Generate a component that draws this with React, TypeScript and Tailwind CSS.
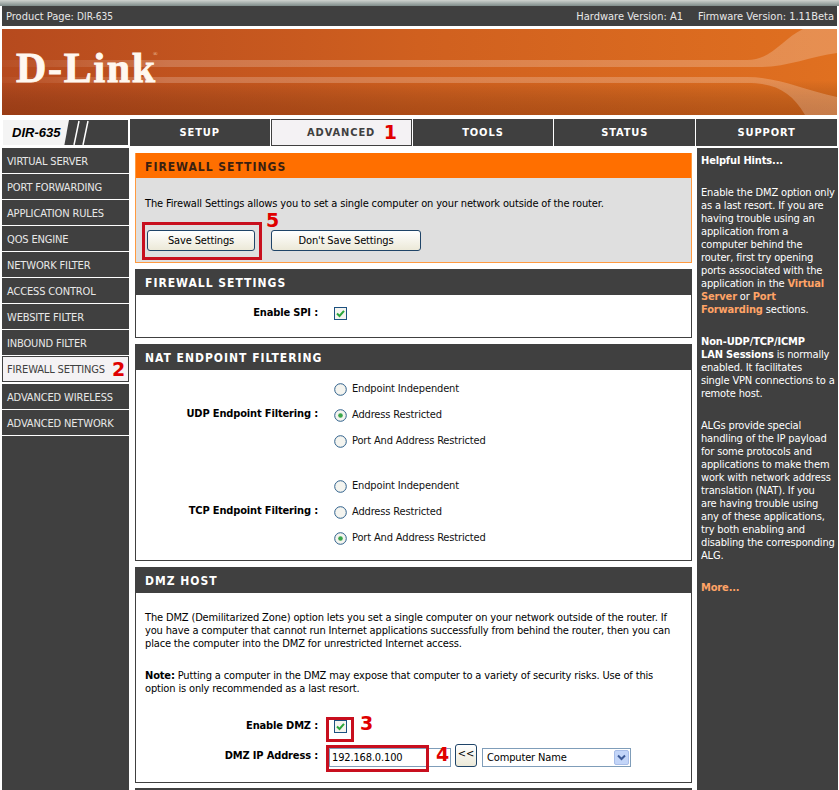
import React from "react";

const font = "font-['DejaVu_Sans_Condensed','DejaVu_Sans',sans-serif]";
const head = "font-['DejaVu_Sans_Condensed','DejaVu_Sans',sans-serif] font-bold";
const label = "w-[182px] text-right font-bold text-[11px] leading-[14px] text-black";

function Num({ n, className }: { n: string; className: string }) {
  return <span className={`absolute font-['DejaVu_Sans',sans-serif] font-bold text-[19px] leading-none tracking-normal text-[#e00000] ${className}`}>{n}</span>;
}

function PanelHead({ title, orange }: { title: string; orange?: boolean }) {
  return (
    <div className={`h-[25px] pl-[9px] flex items-center ${head} text-[12px] tracking-[1px] ${orange ? "bg-[#ff6f00] text-[#3a2010] pt-[2px]" : "bg-[#404040] text-white"}`}>
      {title}
    </div>
  );
}

function Radio({ on }: { on?: boolean }) {
  return (
    <svg width="13" height="13" viewBox="0 0 13 13" className="shrink-0">
      <circle cx="6.5" cy="6.5" r="5.8" fill="#f4f4ef" stroke="#2d5f8a" strokeWidth="1" />
      {on && <circle cx="6.5" cy="6.5" r="2.3" fill="#3aa64a" />}
    </svg>
  );
}

function Check() {
  return (
    <svg width="13" height="13" viewBox="0 0 13 13" className="shrink-0">
      <rect x="0.5" y="0.5" width="12" height="12" fill="#f4f4ef" stroke="#1c5180" />
      <path d="M3 6.5 L5.5 9 L10 3.8" fill="none" stroke="#2aa63a" strokeWidth="2" />
    </svg>
  );
}

function RadioGroup({ lab, sel }: { lab: string; sel: number }) {
  const opts = ["Endpoint Independent", "Address Restricted", "Port And Address Restricted"];
  return (
    <div className="flex items-center">
      <div className={`${label} pb-[3px]`}>{lab}&nbsp;:</div>
      <div className="ml-[16px] flex flex-col">
        {opts.map((o, i) => (
          <div key={o} className="h-[26px] flex items-center gap-[5px]">
            <Radio on={i === sel} />
            <span className="text-[11px] text-[#111] pt-[1px]">{o}</span>
          </div>
        ))}
      </div>
    </div>
  );
}

const side = ["VIRTUAL SERVER", "PORT FORWARDING", "APPLICATION RULES", "QOS ENGINE", "NETWORK FILTER", "ACCESS CONTROL", "WEBSITE FILTER", "INBOUND FILTER"];
const side2 = ["ADVANCED WIRELESS", "ADVANCED NETWORK"];

function SideItem({ t }: { t: string }) {
  return (
    <div className="h-[26px] pl-[5px] pt-[3px] flex items-center border-b border-[#ffffff] bg-[#404040] text-[#e8e8e8] text-[11px]">{t}</div>
  );
}

function NavCell({ t, active, w }: { t: string; active?: boolean; w: string }) {
  return (
    <div className={`${w} h-[27px] pt-[1px] flex items-center justify-center ${head} text-[11px] tracking-[0.9px] ${active ? "bg-[#f4f2f4] text-[#404040] border-[1px] border-[#404040] relative" : "bg-[#404040] text-white"}`}>
      {t}
      {active && <Num n="1" className="left-[112px] top-[3px]" />}
    </div>
  );
}

export default function App() {
  return (
    <div className={`relative w-[839px] h-[790px] overflow-hidden bg-white tracking-[-0.15px] ${font}`}>
      <div className="h-[6px] bg-gradient-to-b from-[#d0d4d0] to-[#7f8c8a]" />
      <div className="mx-[2px] w-[835px]">
        <div className="h-[20px] pt-[2px] bg-[#404040] text-[#e8e8e8] text-[11px] tracking-normal flex items-center justify-between pl-[4px] pr-[3px]">
          <span>Product Page: <span className="text-[10px]">DIR-635</span></span>
          <span className="flex gap-[15px]">
            <span>Hardware Version: A1</span>
            <span>Firmware Version: 1.11Beta</span>
          </span>
        </div>
        <div className="mt-[3px] h-[86px] relative bg-gradient-to-r from-[#b64a1e] via-[#d0601f] to-[#e07020] overflow-hidden">
          <svg width="835" height="86" viewBox="0 0 835 86" className="absolute inset-0">
            <defs>
              <linearGradient id="b" x1="0" x2="1">
                <stop offset="0" stopColor="#ffffff" stopOpacity="0.03" />
                <stop offset="0.2" stopColor="#ffffff" stopOpacity="0.2" />
                <stop offset="1" stopColor="#ffffff" stopOpacity="0.22" />
              </linearGradient>
              <linearGradient id="v" x1="0" x2="0" y1="0" y2="1">
                <stop offset="0" stopColor="#000" stopOpacity="0" />
                <stop offset="0.6" stopColor="#000" stopOpacity="0" />
                <stop offset="1" stopColor="#5a1c00" stopOpacity="0.3" />
              </linearGradient>
            </defs>
            <rect width="835" height="86" fill="url(#v)" />
            <path d="M0 31 H745 C770 31 780 10 801 0 H835 V24 C810 27 785 38 760 38 H0 Z" fill="url(#b)" />
            <path d="M0 48 H745 C775 48 800 60 835 68 V86 H803 C790 64 775 54 745 54 H0 Z" fill="url(#b)" />
          </svg>
          <span className="absolute left-[14px] top-[13px] font-['Liberation_Serif',serif] font-bold text-[42px] leading-[52px] tracking-[1.7px] text-[#fff8f0] [-webkit-text-stroke:0.8px_#fff8f0]">
            D-Link<span className="align-top text-[6px] leading-[24px] font-normal tracking-normal text-[#f6d0b0] ml-[-4px] [-webkit-text-stroke:0px]">®</span>
          </span>
        </div>
        <div className="mt-[4px] flex gap-[1px] border-b border-white">
          <div className="w-[127px] h-[27px] bg-[#404040] flex items-stretch border border-white">
            <div className="w-[66px] bg-[#f4f4f4] text-black italic font-bold text-[13px] tracking-normal flex items-center pl-[9px] [clip-path:polygon(0_0,100%_0,93%_100%,0_100%)] font-['Liberation_Sans',sans-serif]">DIR-635</div>
            <svg width="24" height="25" viewBox="0 0 24 25" className="ml-[2px]">
              <path d="M8 1 L3 25 M17 1 L12 25" stroke="#fff" strokeWidth="1.5" />
            </svg>
          </div>
          <NavCell t="SETUP" w="w-[140px]" />
          <NavCell t="ADVANCED" active w="w-[141px]" />
          <NavCell t="TOOLS" w="w-[141px]" />
          <NavCell t="STATUS" w="w-[141px]" />
          <NavCell t="SUPPORT" w="w-[141px]" />
        </div>
        <div className="mt-[1px] flex gap-[1px] h-[642px]">
          <div className="w-[127px] bg-[#404040] shrink-0">
            {side.map((t) => <SideItem key={t} t={t} />)}
            <div className="relative h-[26px] pt-[2px] bg-[#f4f2f4] border border-[#404040] pl-[4px] flex items-center text-[11px] text-[#404040] shadow-[0_0_0_1px_#fff]">
              FIREWALL SETTINGS
              <Num n="2" className="left-[109px] top-[3px]" />
            </div>
            <div className="h-[2px] bg-[#404040] border-b border-white" />
            {side2.map((t) => <SideItem key={t} t={t} />)}
          </div>

          <div className="w-[566px] shrink-0 bg-white pl-[5px] pr-[4px] pt-[5px] flex flex-col gap-[6px] text-black">
            <div className="shrink-0 border border-[#ff9a40] border-t-0 h-[110px]">
              <PanelHead title="FIREWALL SETTINGS" orange />
              <div className="h-[84px] bg-[#dfdfdf] pl-[9px] pt-[19px] text-[11px] leading-[13px] relative">
                The Firewall Settings allows you to set a single computer on your network outside of the router.
                <div className="mt-[20px] flex gap-[16px] ml-[2px]">
                  <button className="w-[108px] h-[21px] rounded-[3px] border border-[#1f4468] bg-gradient-to-b from-white to-[#ece9d8] text-[11px]">Save Settings</button>
                  <button className="w-[150px] h-[21px] rounded-[3px] border border-[#1f4468] bg-gradient-to-b from-white to-[#ece9d8] text-[11px]">Don't Save Settings</button>
                </div>
                <div className="absolute left-[6px] top-[44px] w-[120px] h-[38px] border-[3px] border-[#c80f1e]" />
                <Num n="5" className="left-[130px] top-[33px]" />
              </div>
            </div>

            <div className="shrink-0 border border-[#404040] h-[69px]">
              <PanelHead title="FIREWALL SETTINGS" />
              <div className="flex items-center pt-[11px]">
                <div className={label}>Enable SPI&nbsp;:</div>
                <div className="ml-[16px]"><Check /></div>
              </div>
            </div>

            <div className="shrink-0 border border-[#404040] h-[217px]">
              <PanelHead title="NAT ENDPOINT FILTERING" />
              <div className="pt-[6px] flex flex-col gap-[19px]">
                <RadioGroup lab="UDP Endpoint Filtering" sel={1} />
                <RadioGroup lab="TCP Endpoint Filtering" sel={2} />
              </div>
            </div>

            <div className="shrink-0 border border-[#404040] h-[216px] relative">
              <PanelHead title="DMZ HOST" />
              <div className="pl-[9px] pt-[18px] text-[11px] leading-[13px]">
                <p>The DMZ (Demilitarized Zone) option lets you set a single computer on your network outside of the router. If<br />you have a computer that cannot run Internet applications successfully from behind the router, then you can<br />place the computer into the DMZ for unrestricted Internet access.</p>
                <p className="mt-[19px]"><b>Note:</b> Putting a computer in the DMZ may expose that computer to a variety of security risks. Use of this<br />option is only recommended as a last resort.</p>
              </div>
              <div className="mt-[23px] flex items-center h-[16px]">
                <div className={label}>Enable DMZ&nbsp;:</div>
                <div className="ml-[16px]"><Check /></div>
              </div>
              <div className="mt-[10px] flex items-center">
                <div className={`${label} pb-[3px]`}>DMZ IP Address&nbsp;:</div>
                <div className="ml-[11px] w-[122px] h-[19px] border border-[#7f9db9] pl-[2px] flex items-center text-[11px] pt-[2px]">192.168.0.100</div>
                <div className="ml-[4px] w-[22px] h-[23px] rounded-[3px] border border-[#1f4468] bg-gradient-to-b from-white to-[#ece9d8] text-[11px] flex items-center justify-center pb-[3px] mb-[4px]">&lt;&lt;</div>
                <div className="ml-[5px] w-[149px] h-[19px] border border-[#7f9db9] pl-[4px] flex items-center justify-between text-[11px] pr-[1px]">
                  <span className="pt-[2px]">Computer Name</span>
                  <span className="w-[15px] h-[15px] rounded-[2px] bg-[#c3d5f8] border border-[#a8bde8] flex items-center justify-center">
                    <svg width="9" height="7" viewBox="0 0 9 7"><path d="M1 1.5 L4.5 5 L8 1.5" fill="none" stroke="#3d5a96" strokeWidth="2" /></svg>
                  </span>
                </div>
              </div>
              <div className="absolute left-[190px] top-[149px] w-[28px] h-[25px] border-[3px] border-[#c80f1e]" />
              <Num n="3" className="left-[224px] top-[146px]" />
              <div className="absolute left-[190px] top-[177px] w-[103px] h-[27px] border-[3px] border-[#c80f1e]" />
              <Num n="4" className="left-[300px] top-[177px]" />
            </div>
            <div className="shrink-0 h-[4px] bg-[#404040] mt-[-1px]" />
          </div>

          <div className="w-[141px] bg-[#404040] text-white text-[11px] leading-[13px] pl-[4px] pt-[6px] shrink-0 whitespace-nowrap">
            <p className="font-bold">Helpful Hints...</p>
            <p className="mt-[19px]">Enable the DMZ option only<br />as a last resort. If you are<br />having trouble using an<br />application from a<br />computer behind the<br />router, first try opening<br />ports associated with the<br />application in the <b className="text-[#ffa366]">Virtual<br />Server</b> or <b className="text-[#ffa366]">Port<br />Forwarding</b> sections.</p>
            <p className="mt-[19px]"><b>Non-UDP/TCP/ICMP<br />LAN Sessions</b> is normally<br />enabled. It facilitates<br />single VPN connections to a<br />remote host.</p>
            <p className="mt-[19px]">ALGs provide special<br />handling of the IP payload<br />for some protocols and<br />applications to make them<br />work with network address<br />translation (NAT). If you<br />are having trouble using<br />any of these applications,<br />try both enabling and<br />disabling the corresponding<br />ALG.</p>
            <p className="mt-[19px] font-bold text-[#ffa366]">More...</p>
          </div>
        </div>
      </div>
    </div>
  );
}
